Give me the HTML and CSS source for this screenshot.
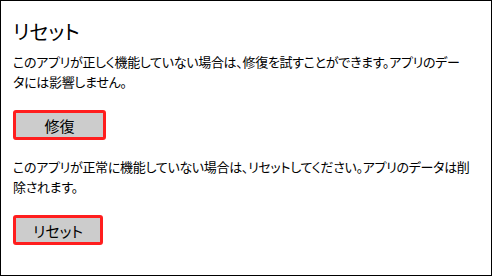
FILE: index.html
```html
<!DOCTYPE html>
<html lang="ja">
<head>
<meta charset="utf-8">
<link rel="stylesheet" href="styles.css">
</head>
<body>
<div class="frame">
  <h1 class="title">リセット</h1>
  <p class="desc">このアプリが正しく機能していない場合は、修復を試すことができます。アプリのデー<br>タには影響しません。</p>
  <div class="btn-row"><button class="btn btn-repair">修復</button></div>
  <p class="desc desc-2">このアプリが正常に機能していない場合は、リセットしてください。アプリのデータは削<br>除されます。</p>
  <div class="btn-row"><button class="btn btn-reset">リセット</button></div>
</div>
</body>
</html>
```
FILE: styles.css
```css
html, body {
  margin: 0;
  padding: 0;
  background: #fff;
}
.frame {
  box-sizing: border-box;
  width: 492px;
  height: 276px;
  border: 1px solid #000;
  padding: 17px 12px 0 12px;
  font-family: "Noto Sans CJK JP", sans-serif;
  font-feature-settings: "palt";
  color: #000;
  display: flex;
  flex-direction: column;
}
.title {
  margin: 0;
  font-size: 20px;
  line-height: 28px;
  font-weight: normal;
}
.desc {
  margin: 6px 0 0 0;
  font-size: 13px;
  letter-spacing: -0.3px;
  line-height: 20px;
  white-space: nowrap;
}
.desc-2 {
  margin-top: 17px;
}
.btn-row {
  display: flex;
  margin-top: 18px;
}
.btn {
  box-sizing: border-box;
  height: 30px;
  border: 3px solid #ff1e1e;
  border-radius: 3px;
  background: #cccccc;
  font-family: inherit;
  font-feature-settings: "palt";
  font-size: 15px;
  color: #000;
  padding: 0;
}
.btn-repair { width: 93px; }
.btn-reset { width: 90px; }
```
